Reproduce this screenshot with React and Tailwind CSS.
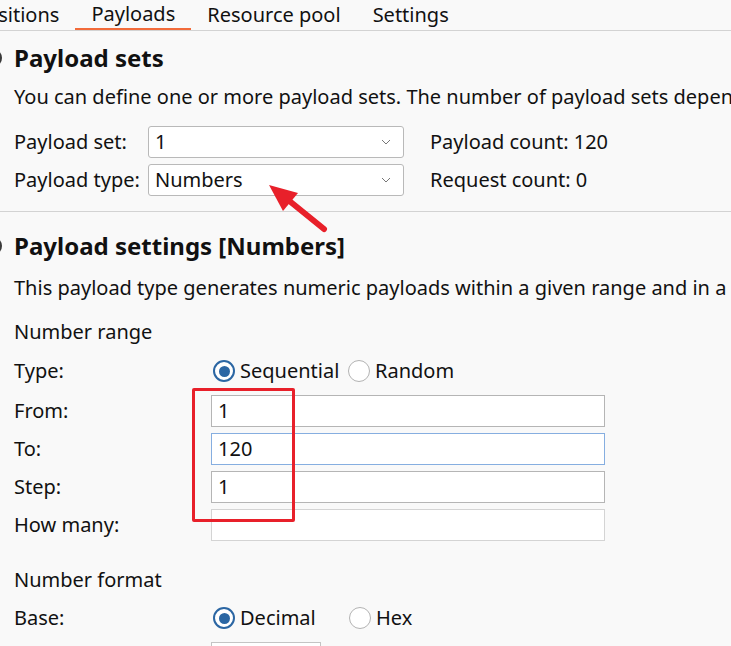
const TABS = [
  { key: "positions", label: "Positions" },
  { key: "payloads", label: "Payloads" },
  { key: "pool", label: "Resource pool" },
  { key: "settings", label: "Settings" },
];

function Chevron() {
  return (
    <svg width="10" height="6" viewBox="0 0 10 6" className="mr-[12px]">
      <path d="M1 1 L5 5 L9 1" fill="none" stroke="#777" strokeWidth="1" />
    </svg>
  );
}

function Combo({ value }) {
  return (
    <div className="flex h-[32px] w-[256px] items-center justify-between rounded-[3px] border border-[#b9b9b9] bg-white pl-[6px]">
      <span>{value}</span>
      <Chevron />
    </div>
  );
}

function Radio({ checked, label, width }) {
  return (
    <div className={`flex items-center ${width}`}>
      {checked ? (
        <span className="flex h-[22px] w-[22px] items-center justify-center rounded-full border-[2.5px] border-[#2b66a3] bg-white">
          <span className="h-[11px] w-[11px] rounded-full bg-[#2b66a3]" />
        </span>
      ) : (
        <span className="h-[22px] w-[22px] rounded-full border-[1.5px] border-[#b3b3b3] bg-white" />
      )}
      <span className="ml-[5px]">{label}</span>
    </div>
  );
}

function Field({ label, value, border = "border-[#b5b5b5]" }) {
  return (
    <div className="flex h-[32px] items-center">
      <span className="w-[197px] shrink-0">{label}</span>
      <div className={`flex h-[32px] w-[394px] items-center border bg-white pl-[6px] ${border}`}>{value}</div>
    </div>
  );
}

function SectionHeading({ children }) {
  return (
    <div className="flex h-[32px] items-center">
      <span className="-ml-[30px] mr-[12px] h-[18px] w-[18px] rounded-full bg-[#3a3a3a]" />
      <h2 className="text-[24px] font-bold">{children}</h2>
    </div>
  );
}

export default function App() {
  return (
    <div
      className="relative h-[646px] w-[731px] overflow-hidden bg-[#f9f9f9] text-[20px] text-[#111] whitespace-nowrap"
      style={{ fontFamily: '"Noto Sans", "Liberation Sans", sans-serif' }}
    >
      {/* Tabs */}
      <div className="flex h-[31px] border-b border-[#d3d3d3]">
        {TABS.map((t, i) => (
          <div
            key={t.key}
            className={`flex h-[30px] items-center px-[16px] leading-none ${
              t.key === "payloads" ? "border-b-2 border-[#f26b3a]" : ""
            } ${i === 0 ? "-ml-[42px]" : ""}`}
          >
            {t.label}
          </div>
        ))}
      </div>

      <div className="px-[14px]">
        {/* Payload sets */}
        <div className="mt-[11px]">
          <SectionHeading>Payload sets</SectionHeading>
        </div>
        <p className="mt-[10px] h-[26px] leading-[26px]">
          You can define one or more payload sets. The number of payload sets depends on the attack type.
        </p>

        <div className="mt-[16px] flex flex-col gap-[6px]">
          <div className="flex h-[32px] items-center">
            <span className="w-[134px] shrink-0">Payload set:</span>
            <Combo value="1" />
            <span className="ml-[26px]">Payload count: 120</span>
          </div>
          <div className="flex h-[32px] items-center">
            <span className="w-[134px] shrink-0">Payload type:</span>
            <Combo value="Numbers" />
            <span className="ml-[26px]">Request count: 0</span>
          </div>
        </div>
      </div>

      <div className="mt-[15px] h-px bg-[#d3d3d3]" />

      <div className="px-[14px]">
        {/* Payload settings */}
        <div className="mt-[18px]">
          <SectionHeading>Payload settings [Numbers]</SectionHeading>
        </div>
        <p className="mt-[13px] h-[26px] leading-[26px]">
          This payload type generates numeric payloads within a given range and in a specified format.
        </p>

        <p className="mt-[18px] h-[26px] leading-[26px]">Number range</p>

        <div className="mt-[10px] flex h-[32px] items-center">
          <span className="w-[199px] shrink-0">Type:</span>
          <Radio checked label="Sequential" width="w-[135px]" />
          <Radio label="Random" />
        </div>

        <div className="mt-[8px] flex flex-col gap-[6px]">
          <Field label="From:" value="1" />
          <Field label="To:" value="120" border="border-[#86aee0]" />
          <Field label="Step:" value="1" />
          <Field label="How many:" value="" border="border-[#d4d4d4]" />
        </div>

        <p className="mt-[26px] h-[26px] leading-[26px]">Number format</p>

        <div className="mt-[9px] flex h-[32px] items-center">
          <span className="w-[199px] shrink-0">Base:</span>
          <Radio checked label="Decimal" width="w-[136px]" />
          <Radio label="Hex" />
        </div>

        <div className="ml-[197px] mt-[8px] h-[32px] w-[110px] border border-[#c4c4c4] bg-white" />
      </div>

      {/* Annotations */}
      <div className="absolute left-[192px] top-[388px] h-[134px] w-[103px] rounded-[2px] border-[3px] border-[#e8202a]" />
      <svg className="absolute left-[260px] top-[178px]" width="75" height="60" viewBox="260 178 75 60">
        <path d="M324 229 L287 199" stroke="#e8202a" strokeWidth="6" strokeLinecap="round" />
        <path d="M269 185 L298 193 L283 211 Z" fill="#e8202a" />
      </svg>
    </div>
  );
}
